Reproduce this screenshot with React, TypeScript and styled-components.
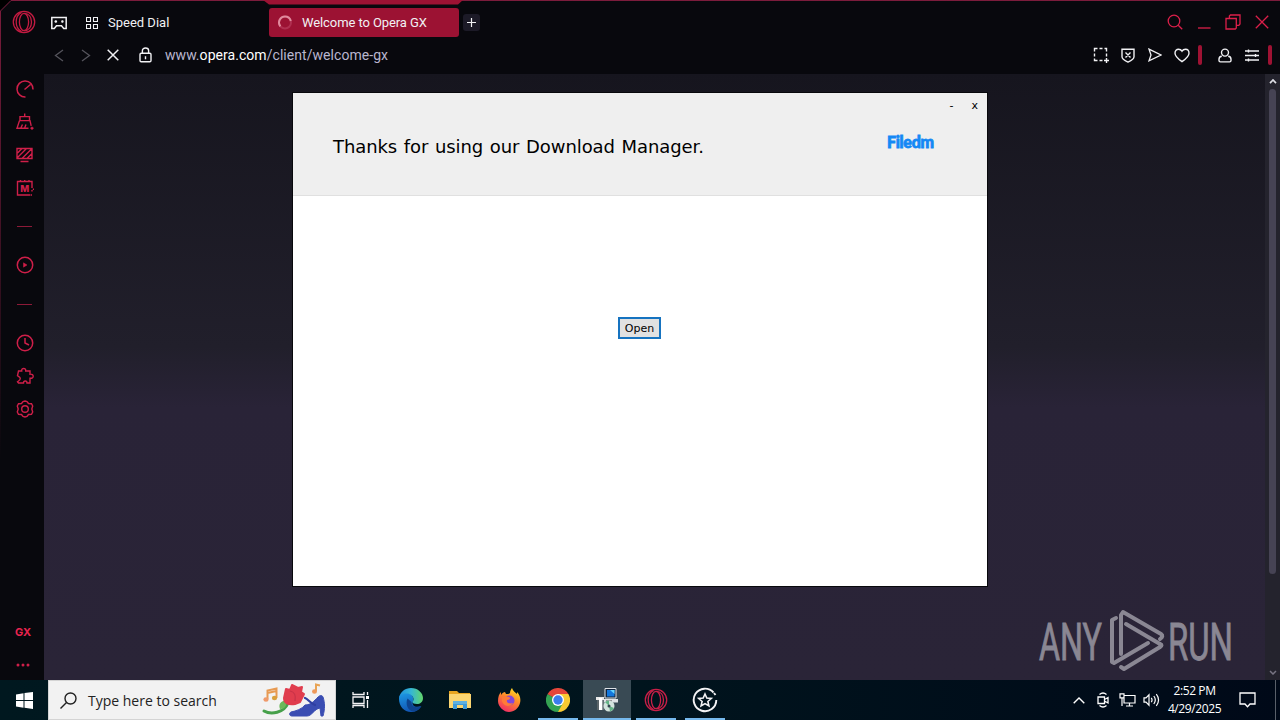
import type { ReactNode } from "react";
import styled, { createGlobalStyle } from "styled-components";

type IconProps = { w: number; h: number; sw?: number; children: ReactNode };

const Icon = ({ w, h, sw = 1.3, children }: IconProps) => (
  <Svg width={w} height={h} viewBox={`0 0 ${w} ${h}`} strokeWidth={sw}>
    {children}
  </Svg>
);

const OperaRing = () => (
  <Icon w={24} h={24} sw={1.3}>
    <circle cx="12" cy="12" r="10.7" />
    <ellipse cx="12" cy="12" rx="4.6" ry="8.6" />
    <path d="M9.5 2.4C5.500 4.500 4.200 8 4.200 12s1.300 7.500 5.300 9.600M12 3.400c5 0 7.500 4 7.500 8.600s-2.500 8.600-7.500 8.600" />
  </Icon>
);

const TitleBar = () => (
  <TitleRow>
    <OperaSlot>
      <OperaRing />
    </OperaSlot>
    <GamepadSlot>
      <Icon w={18} h={14} sw={1.5}>
        <path d="M1.8 1.5h14.4v11h-2.5l-2.2-2.7h-5l-2.2 2.7H1.8z" />
        <path d="M4.5 5.5h2.6M5.8 4.2v2.6M11.2 5.5h2.4M12.4 4.3v2.4" />
      </Icon>
    </GamepadSlot>
    <SpeedDialTab>
      <Icon w={12} h={12} sw={1.1}>
        <path d="M.5.5h4v4h-4zM7.500.5h4v4h-4zM.5 7.500h4v4h-4zM7.500 7.500h4v4h-4z" />
      </Icon>
      <TabText>Speed Dial</TabText>
    </SpeedDialTab>
    <ActiveTab>
      <Icon w={16} h={16} sw={2}>
        <circle cx="8" cy="7.500" r="6" stroke="#b02f50" />
        <path d="M3.4 11.300A6 6 0 0 1 8 1.500a6 6 0 0 1 5.800 4.500" stroke="#e08a9d" />
      </Icon>
      <TabText $spacing={-0.09}>Welcome to Opera GX</TabText>
    </ActiveTab>
    <NewTab>
      <Icon w={11} h={11} sw={1.2}>
        <path d="M5.5 1v9M1 5.5h9" />
      </Icon>
    </NewTab>
    <WindowControls>
      <ControlSlot>
        <Icon w={16} h={16}>
          <circle cx="7" cy="7" r="5.8" />
          <path d="M11.2 11.2l4 4" />
        </Icon>
      </ControlSlot>
      <ControlSlot>
        <Icon w={14} h={14}>
          <path d="M1 13h12.500" />
        </Icon>
      </ControlSlot>
      <ControlSlot>
        <Icon w={16} h={16}>
          <path d="M1 4.5h10.3V14l-1 1H1zM4.4 4.3V2l1-1H15v9l-1.2 1.4h-2.4" />
        </Icon>
      </ControlSlot>
      <ControlSlot>
        <Icon w={14} h={14}>
          <path d="M.8.8l12.4 12.4M13.2.8L.8 13.2" />
        </Icon>
      </ControlSlot>
    </WindowControls>
  </TitleRow>
);

const AddressBar = () => (
  <AddressRow>
    <NavGroup>
      <NavSlot $dim>
        <Icon w={10} h={13}>
          <path d="M9 1L1.5 6.5 9 12" />
        </Icon>
      </NavSlot>
      <NavSlot $dim>
        <Icon w={10} h={13}>
          <path d="M1 1l7.5 5.5L1 12" />
        </Icon>
      </NavSlot>
      <NavSlot>
        <Icon w={12} h={12} sw={1.5}>
          <path d="M.7.7l10.6 10.6M11.3.7L.7 11.3" />
        </Icon>
      </NavSlot>
    </NavGroup>
    <LockSlot>
      <Icon w={13} h={16} sw={1.4}>
        <rect x="1" y="6.2" width="11" height="8.6" rx="1.2" />
        <path d="M3.4 6V3.6C3.4 2 4.6 1 6.5 1s3.1 1 3.1 2.6V6M6.5 9.2v3" />
      </Icon>
    </LockSlot>
    <Url>
      www.<b>opera.com</b>/client/welcome-gx
    </Url>
    <ActionGroup>
      <ActionSlot>
        <Icon w={16} h={16} sw={1.4}>
          <path d="M1.5 4.5v-3h3M6.5 1.5h3M11.5 1.5h2v3M13.5 6.5v3M1.5 6.5v3M1.5 11.5v2h3M6.5 13.5h3M11 13.5h5M13.5 11v5" />
        </Icon>
      </ActionSlot>
      <ActionSlot>
        <Icon w={14} h={15} sw={1.4}>
          <path d="M1 1.3h12v7.5c0 2.6-3 4-6 5.3-3-1.3-6-2.7-6-5.3zM4.500 4.600l5 5M9.500 4.600l-5 5" />
        </Icon>
      </ActionSlot>
      <ActionSlot>
        <Icon w={14} h={14}>
          <path d="M1 1.2L13 7 1 12.8 3 7z" />
        </Icon>
      </ActionSlot>
      <ActionSlot>
        <Icon w={16} h={15} sw={1.4}>
          <path d="M8 13.6C4 10.8 1 8.300 1 5.200 1 2.800 2.600 1.200 4.500 1.200 6 1.200 7.300 2 8 3.200 8.700 2 10 1.200 11.500 1.200 13.400 1.200 15 2.800 15 5.200c0 3.100-3 5.600-7 8.400z" />
        </Icon>
      </ActionSlot>
      <RedBar />
      <ActionSlot>
        <Icon w={14} h={15} sw={1.4}>
          <circle cx="7" cy="4.6" r="3.5" />
          <path d="M3.800 8.300C2 8.500 1 9.500 1 11.200v1.300c0 .9.5 1.400 1.400 1.400h9.200c.9 0 1.400-.5 1.400-1.400v-1.300c0-1.700-1-2.700-2.800-2.900" />
        </Icon>
      </ActionSlot>
      <ActionSlot>
        <Icon w={14} h={13} sw={1.4}>
          <path d="M0 2h14M0 6.500h14M0 11h14M3.500.5v3M10.500 5v3M3.500 9.500v3" />
        </Icon>
      </ActionSlot>
      <RedBar />
    </ActionGroup>
  </AddressRow>
);

const SideBar = () => (
  <Side>
    <SideSlot $h={29}>
      <Icon w={18} h={18} sw={1.500}>
        <path d="M17 9.500A8 8 0 1 0 9.500 17M8.500 9.500L14.500 4.500" />
      </Icon>
    </SideSlot>
    <SideSlot>
      <Icon w={18} h={17} sw={1.400}>
        <path d="M4 7.500V3.600h9.500v3.900M8.700 3.500V.5M3.500 7.600h10.500l1.200 5.200M3.500 7.600L1 15.200h11.500M6.500 11.500l-1.800 3.700M10 11.500l-1.500 3.700M14.500 15.200h3M16 13.700v3" />
      </Icon>
    </SideSlot>
    <SideSlot>
      <Icon w={17} h={16} sw={1.400}>
        <path d="M1 1.500h15v10H1zM1.500 6l4.500-4.500M1.500 10.500l9-9M6 11.500l9.500-9.500M11 11.500l5-5M4.500 14.500h8" />
      </Icon>
    </SideSlot>
    <SideSlot>
      <Icon w={18} h={18} sw={1.400}>
        <path d="M16 9V2.500H1.500v13.500H14M4.500 2.500V1M8.700 2.500V1M13 2.500V1M16 11v1.500M17.500 9.500v1.500M14.500 16h1.500" />
        <MemoryLetter x="8.800" y="12.600" textAnchor="middle">
          M
        </MemoryLetter>
      </Icon>
    </SideSlot>
    <SideSlot $h={44}>
      <Divider />
    </SideSlot>
    <SideSlot $h={34}>
      <Icon w={18} h={18} sw={1.500}>
        <circle cx="9" cy="9" r="7.700" />
        <path d="M7.500 6.800L11 9l-3.500 2.200z" fill="currentColor" strokeWidth="0.500" />
      </Icon>
    </SideSlot>
    <SideSlot $h={44}>
      <Divider />
    </SideSlot>
    <SideSlot>
      <Icon w={18} h={18} sw={1.500}>
        <circle cx="9" cy="9" r="7.700" />
        <path d="M9 4v5l4 2" />
      </Icon>
    </SideSlot>
    <SideSlot>
      <Icon w={18} h={18} sw={1.400}>
        <path d="M2.500 4h3.200C5.500 2 6.500 1.500 7.700 1.500S9.900 2 9.700 4H14v3.200c2.200-.2 3.200.5 3.200 2s-1 2.200-3.200 2V16h-3c0-1.500-.8-2-1.800-2s-1.700.5-1.700 2h-5l-1-1.200c1-1 2.800-1.500 2.800-3.300 0-1.500-1.800-2-2.800-2.800z" />
      </Icon>
    </SideSlot>
    <SideSlot>
      <Icon w={18} h={18} sw={1.400}>
        <path d="M9 1l2 .5 1.500 2 3 .2 1.200 2.300-.9 3 .9 3-1.200 2.300-3 .2-1.500 2L9 17l-2-.5-1.500-2-3-.2L1.300 12l.9-3-.9-3 1.200-2.300 3-.2 1.500-2z" />
        <circle cx="9" cy="9" r="3.300" />
      </Icon>
    </SideSlot>
    <SideBottom>
      <GxLabel>GX</GxLabel>
      <SideSlot $h={31}>
        <Icon w={14} h={4} sw={0}>
          <g fill="currentColor">
            <circle cx="2" cy="2" r="1.500" />
            <circle cx="7" cy="2" r="1.500" />
            <circle cx="12" cy="2" r="1.500" />
          </g>
        </Icon>
      </SideSlot>
    </SideBottom>
  </Side>
);

const InstallerDialog = () => (
  <Dialog>
    <DialogHeader>
      <DialogTitle>Thanks for using our Download Manager.</DialogTitle>
      <HeaderRight>
        <DialogButtons>
          <span>-</span>
          <span>x</span>
        </DialogButtons>
        <BrandName>Filedm</BrandName>
      </HeaderRight>
    </DialogHeader>
    <DialogBody>
      <OpenButton type="button">Open</OpenButton>
    </DialogBody>
  </Dialog>
);

const Watermark = () => (
  <WatermarkSvg width="240" height="70" viewBox="0 0 240 70">
    <g
      fill="#8a8793"
      stroke="#8a8793"
      strokeWidth="0.900"
      fontFamily="Roboto, sans-serif"
      fontSize="52.500"
    >
      <text x="1" y="51" textLength="63" lengthAdjust="spacingAndGlyphs">ANY</text>
      <text x="130" y="51" textLength="65" lengthAdjust="spacingAndGlyphs">RUN</text>
    </g>
    <g fill="none" stroke="#8a8793" strokeWidth="4" strokeLinejoin="round" strokeLinecap="round">
      <path d="M78 9l-4 2v42l2 1 34-20" />
      <path d="M83 45V6l2-3 38 22q3 2-1 5" />
      <path d="M88 15l34 20q3 1 0 3L86 60l-3-2" />
    </g>
  </WatermarkSvg>
);

const SearchArt = () => (
  <svg width="66" height="36" viewBox="0 0 66 36">
    <path d="M3 29c7 4 20 2 24-8" fill="none" stroke="#46a04a" strokeWidth="3" strokeLinecap="round" />
    <path d="M19 27c-2-5 1-8 6-9 1 6-1 9-6 9z" fill="#6cb85a" />
    <path d="M25 7l4 1 2-5 6 3 4-1-1 5 3 2-4 8-5 2c-7 1-11-1-11-6z" fill="#e03d4e" stroke="#e03d4e" strokeWidth="2" strokeLinejoin="round" />
    <path d="M29 9c5 1 6 4 5 10" fill="none" stroke="#c73248" strokeWidth="1.200" />
    <path d="M6.500 17V8.500l9-2V16M6.500 11l9-2" fill="none" stroke="#e79a52" strokeWidth="2" />
    <ellipse cx="5" cy="17.500" rx="2.600" ry="2.200" fill="#ef9a6b" />
    <ellipse cx="13.500" cy="16" rx="2.600" ry="2.200" fill="#d9a03d" />
    <path d="M55 9V2.500l4 1" fill="none" stroke="#e9a455" strokeWidth="2" />
    <ellipse cx="53.500" cy="9.500" rx="2.500" ry="2.200" fill="#ef9a5b" />
    <path d="M30 30c5-1 11-3 14-7 6 0 9-4 13-8 2-2 4-2 5 0 2 6 2 12 0 19h-2l-1-8c-6 1-8 8-13 8H31c-3 0-3-3-1-4z" fill="#3a4db2" stroke="#3a4db2" strokeLinejoin="round" />
    <path d="M44 16c3 1 5 5 10 7" fill="none" stroke="#2f3fa2" strokeWidth="2.200" strokeLinecap="round" />
  </svg>
);

const EdgeIcon = () => (
  <svg width="24" height="24" viewBox="0 0 24 24">
    <defs>
      <linearGradient id="edgeTop" x1="0" x2="1">
        <stop offset="0" stopColor="#1f8fdc" />
        <stop offset=".5" stopColor="#35b6d6" />
        <stop offset="1" stopColor="#62d66a" />
      </linearGradient>
      <linearGradient id="edgeBase" x1="0" y1="0" x2="0.300" y2="1">
        <stop offset="0" stopColor="#1d9be6" />
        <stop offset="1" stopColor="#1257b5" />
      </linearGradient>
    </defs>
    <path d="M0 11C0 5 5 4 9 5c4 1 6 4 5 8-2 5 3 7 8 5-2 4-6 6-10 6C5 24 0 18 0 11z" fill="url(#edgeBase)" />
    <path d="M8.500 10.500C6 16 9 23 14.500 23.700 18.500 23 21 21 22.500 18c-5 2.500-10 1-10-4z" fill="#0e448f" />
    <path d="M0 10.500C1 4 6 0 12 0c7 0 12 5 12 10 0 4-3 6-6 6-3 0-4.500-1-4.500-2s1-1 1-3c0-3-3-5.500-7.500-5.500S1 8 0 10.500z" fill="url(#edgeTop)" />
  </svg>
);

const FolderIcon = () => (
  <svg width="22" height="20" viewBox="0 0 22 20">
    <path d="M0 1h8l2 2h11v4H0z" fill="#e8a520" />
    <path d="M0 4h22v14H0z" fill="#fbd571" />
    <path d="M4 11h14v8h-4v-4H8v4H4z" fill="#3f9ad8" />
    <path d="M4 11h14v3H4z" fill="#5fb0e0" />
  </svg>
);

const FirefoxIcon = () => (
  <svg width="24" height="24" viewBox="0 0 24 24">
    <defs>
      <linearGradient id="fox" x1="0.800" y1="0" x2="0.300" y2="1">
        <stop offset="0" stopColor="#ffe226" />
        <stop offset=".45" stopColor="#ff8a2a" />
        <stop offset="1" stopColor="#f02b66" />
      </linearGradient>
    </defs>
    <path d="M1 13c0-4 1-7 3-9v3c1-2 3-3 4-3l1 2c2 0 3 0 4-1 0-2 1-4 2-5 1 3 3 4 5 6v-2c3 3 4 7 3 11-1 5-6 9-11 9S1 19 1 13z" fill="url(#fox)" />
    <circle cx="12.500" cy="12.500" r="5" fill="#8347d9" />
    <path d="M5 9c3-2 5 0 7 0 2 1 1 3-2 3-1 3 3 4 6 3-3 5-10 3-11-2z" fill="#ff7b37" />
  </svg>
);

const ChromeIcon = () => (
  <svg width="24" height="24" viewBox="0 0 24 24">
    <path d="M12 12L1.600 6A12 12 0 0 1 22.400 6z" fill="#e5463a" />
    <path d="M12 12V6h10.400A12 12 0 0 1 12 24z" fill="#f9c932" />
    <path d="M12 12l5 3-5 9A12 12 0 0 1 1.600 6z" fill="#34a352" />
    <path d="M1.600 6H12v6z" fill="#e5463a" />
    <circle cx="12" cy="12" r="6" fill="#fff" />
    <circle cx="12" cy="12" r="4.700" fill="#3b7ded" />
  </svg>
);

const InstallerIcon = () => (
  <svg width="24" height="24" viewBox="0 0 24 24">
    <path d="M1 9h8v3H1z" fill="#e9e9e9" />
    <path d="M2 12h2v10H2z" fill="#5b6468" />
    <path d="M4 10h3v12H4z" fill="#fff" />
    <path d="M7 12h1.500v10H7z" fill="#8d9498" />
    <path d="M10 .5h11v9.500H10z" fill="#10243c" stroke="#dfe3e6" />
    <path d="M12 2h7.500v6.500H12z" fill="#1277dd" />
    <path d="M15 2h4.500v4z" fill="#62d4ff" />
    <path d="M9 11h14v3.500H9z" fill="#dfe2e5" />
    <path d="M11 13h6" stroke="#444" />
    <circle cx="14" cy="18" r="5.500" fill="#d3e3dd" />
    <path d="M14 18l-4-4a6 6 0 0 1 4-1.500zM14 18l5 2a6 6 0 0 1-4 3.500z" fill="#64b386" />
    <circle cx="14" cy="18" r="1.500" fill="#354750" />
  </svg>
);

const StarIcon = () => (
  <Icon w={26} h={26} sw={1.900}>
    <path d="M21.500 5.500A11.300 11.300 0 1 0 24.300 13M22 6l1.500 2" />
    <path d="M13 7l1.800 4.100 4.500.4-3.400 3 1 4.400-3.900-2.300L9.100 18.900l1-4.400-3.400-3 4.500-.4z" strokeWidth="1.600" />
  </Icon>
);

const TaskBar = () => (
  <Bar>
    <StartSlot>
      <svg width="17" height="17" viewBox="0 0 17 17">
        <path d="M0 2.400L7.500 1.300V8H0zM8.500 1.100L17 0v8H8.500zM0 9h7.500v6.700L0 14.600zM8.500 9H17v8l-8.500-1.200z" fill="#fff" />
      </svg>
    </StartSlot>
    <SearchBox>
      <Icon w={17} h={17} sw={1.400}>
        <circle cx="10.500" cy="6.500" r="5.500" />
        <path d="M6.500 10.500L.5 16.500" />
      </Icon>
      <SearchText>Type here to search</SearchText>
      <SearchArt />
    </SearchBox>
    <TaskSlot>
      <Icon w={18} h={16} sw={1.300}>
        <path d="M1 0v2.500h11V0M1 5h11v6.500H1zM1 16v-2.500h11V16M15.500 0v3M15.500 8v8" />
        <path d="M14 4h3v3h-3z" fill="#fff" stroke="none" />
      </Icon>
    </TaskSlot>
    <RunningApps>
      <TaskSlot>
        <EdgeIcon />
      </TaskSlot>
      <TaskSlot>
        <FolderIcon />
      </TaskSlot>
      <TaskSlot>
        <FirefoxIcon />
      </TaskSlot>
      <TaskSlot $running>
        <ChromeIcon />
      </TaskSlot>
      <TaskSlot $running $active>
        <InstallerIcon />
      </TaskSlot>
      <TaskSlot $running $red>
        <OperaRing />
      </TaskSlot>
      <TaskSlot $running>
        <StarIcon />
      </TaskSlot>
    </RunningApps>
    <Tray>
      <TraySlot>
        <Icon w={12} h={7} sw={1.400}>
          <path d="M.7 6.300L6 1l5.300 5.300" />
        </Icon>
      </TraySlot>
      <TraySlot>
        <Icon w={12} h={16} sw={1.300}>
          <path d="M2.500 2.500C4.500.8 7.500.8 9.500 2.500M2.500 13.500c2 1.700 5 1.700 7 0M1 5h6.500v6.500H1zM7.500 7.500L11 5.500v5.500L7.500 9" />
        </Icon>
      </TraySlot>
      <TraySlot>
        <Icon w={17} h={14} sw={1.200}>
          <path d="M5 2.500h11v7.500H5zM10.500 10v3M7 13h7M1 .8h4v4H1zM3 4.800V13" />
        </Icon>
      </TraySlot>
      <TraySlot>
        <Icon w={17} h={14} sw={1.200}>
          <path d="M1 4.800h2l3-3v10.400l-3-3H1zM8.300 4.800q1.500 2.200 0 4.400M10.800 3q3 4 0 8M13.300 1.200q4.500 5.800 0 11.600" />
        </Icon>
      </TraySlot>
      <Clock>
        <span>2:52 PM</span>
        <span>4/29/2025</span>
      </Clock>
      <NotifySlot>
        <Icon w={17} h={16} sw={1.300}>
          <path d="M1 1h15v11h-5l-2.500 2.700L6 12H1z" />
        </Icon>
      </NotifySlot>
      <ShowDesktop />
    </Tray>
  </Bar>
);

const App = () => (
  <>
    <GlobalStyle />
    <Screen>
      <Browser>
        <TitleBar />
        <AddressBar />
        <Main>
          <SideBar />
          <PageArea />
          <ScrollTrack>
            <Icon w={8} h={5} sw={1.700}>
              <path d="M1 4.200L4 1l3 3.200" />
            </Icon>
            <ScrollThumb />
            <Icon w={8} h={5} sw={1.500}>
              <path d="M1 1l3 3 3-3" stroke="#777482" />
            </Icon>
          </ScrollTrack>
        </Main>
        <FrameLines width="1280" height="460" viewBox="0 0 1280 460">
          <defs>
            <linearGradient id="edge" x1="0" y1="0" x2="0" y2="460" gradientUnits="userSpaceOnUse">
              <stop offset="0" stopColor="#7c1c3c" />
              <stop offset="1" stopColor="#7c1c3c" stopOpacity="0" />
            </linearGradient>
          </defs>
          <path d="M0 0h11L0 10z" fill="#000" />
          <path d="M.5 460V11L11 .5h1269" fill="none" stroke="url(#edge)" />
          <path d="M263 0h200l-5 4.500H269z" fill="#9c1233" />
        </FrameLines>
      </Browser>
      <TaskBar />
      <InstallerDialog />
      <Watermark />
    </Screen>
  </>
);

export default App;

const GlobalStyle = createGlobalStyle`
  * {
    box-sizing: border-box;
  }

  body {
    margin: 0;
    overflow: hidden;
    background: #000;
  }
`;

const Svg = styled.svg`
  display: block;
  flex-shrink: 0;
  fill: none;
  stroke: currentColor;
`;

const Screen = styled.div`
  position: relative;
  display: flex;
  flex-direction: column;
  width: 1280px;
  height: 720px;
  overflow: hidden;
  font-family: Roboto, sans-serif;
`;

const Browser = styled.div`
  position: relative;
  display: flex;
  flex-direction: column;
  height: 680px;
  background: #08080d;
`;

const FrameLines = styled.svg`
  position: absolute;
  top: 0;
  left: 0;
  pointer-events: none;
`;

const TitleRow = styled.div`
  display: flex;
  align-items: center;
  height: 45px;
  padding-left: 12px;
  color: #f1f1f4;
`;

const OperaSlot = styled.div`
  width: 38px;
  padding-bottom: 1px;
  color: #c41b42;
`;

const GamepadSlot = styled.div`
  width: 36px;
`;

const SpeedDialTab = styled.div`
  display: flex;
  align-items: center;
  gap: 10px;
  width: 183px;
`;

const ActiveTab = styled.div`
  display: flex;
  align-items: center;
  gap: 9px;
  width: 190px;
  height: 29px;
  padding-left: 8px;
  border-radius: 3px;
  background: #9c1233;
`;

const TabText = styled.span<{ $spacing?: number }>`
  font-size: 13px;
  letter-spacing: ${(props) => props.$spacing ?? 0}px;
  white-space: nowrap;
`;

const NewTab = styled.div`
  display: flex;
  justify-content: center;
  align-items: center;
  width: 17px;
  height: 17px;
  margin-left: 4px;
  border-radius: 3px;
  background: #1c1a27;
`;

const WindowControls = styled.div`
  display: flex;
  margin-left: auto;
  padding: 0 4px 1px 0;
  color: #dc1f4a;
`;

const ControlSlot = styled.div`
  display: flex;
  justify-content: center;
  align-items: center;
  width: 29px;
`;

const AddressRow = styled.div`
  display: flex;
  align-items: center;
  height: 29px;
  padding-bottom: 9px;
  color: #f1f1f4;
`;

const NavGroup = styled.div`
  display: flex;
  align-items: center;
  padding-left: 45px;
`;

const NavSlot = styled.div<{ $dim?: boolean }>`
  display: flex;
  justify-content: center;
  align-items: center;
  width: 27px;
  color: ${(props) => (props.$dim ? "#55545c" : "#f1f1f4")};
`;

const LockSlot = styled.div`
  width: 39px;
  padding-left: 13px;
`;

const Url = styled.div`
  padding-bottom: 1px;
  font-size: 14px;
  letter-spacing: 0.05px;
  white-space: nowrap;
  color: #b9b6cf;

  > b {
    font-weight: 400;
    color: #fff;
  }
`;

const ActionGroup = styled.div`
  display: flex;
  align-items: center;
  margin-left: auto;
  padding-right: 8px;
`;

const ActionSlot = styled.div`
  display: flex;
  justify-content: center;
  align-items: center;
  width: 27px;
`;

const RedBar = styled.div`
  width: 4px;
  height: 20px;
  margin: 0 9px 0 3px;
  border-radius: 2px;
  background: #9f1233;

  &:last-child {
    margin: 0 0 0 3px;
  }
`;

const Main = styled.div`
  display: flex;
  flex: 1;
`;

const Side = styled.div`
  display: flex;
  flex-direction: column;
  width: 44px;
  padding-left: 5px;
  color: #cf1f49;
`;

const SideSlot = styled.div<{ $h?: number }>`
  display: flex;
  justify-content: center;
  align-items: center;
  height: ${(props) => props.$h ?? 33}px;

  &:first-child {
    margin-bottom: 2px;
  }
`;

const MemoryLetter = styled.text`
  fill: currentColor;
  stroke: none;
  font-family: Inter, sans-serif;
  font-size: 9.5px;
  font-weight: 800;
`;

const SideBottom = styled.div`
  margin-top: auto;
  padding-right: 3px;
`;

const Divider = styled.div`
  width: 15px;
  height: 1px;
  background: #8c1a38;
`;

const GxLabel = styled.div`
  text-align: center;
  font-family: Inter, sans-serif;
  font-size: 11px;
  font-weight: 700;
  line-height: 33px;
  color: #e8244f;
`;

const PageArea = styled.div`
  flex: 1;
  background: linear-gradient(#16151e, #211f2b 45%, #292337 55%, #2a2437);
`;

const ScrollTrack = styled.div`
  display: flex;
  flex-direction: column;
  justify-content: space-between;
  align-items: center;
  width: 15px;
  padding: 5px 0;
  background: #24232d;
  color: #dddde4;
`;

const ScrollThumb = styled.div`
  width: 7px;
  height: 485px;
  margin: 5px 0 auto;
  border-radius: 4px;
  background: #464354;
`;

const Dialog = styled.div`
  position: absolute;
  top: 92px;
  left: 292px;
  display: flex;
  flex-direction: column;
  width: 696px;
  height: 495px;
  border: 1px solid #08080c;
  background: #fff;
`;

const DialogHeader = styled.div`
  display: flex;
  justify-content: space-between;
  height: 103px;
  padding-left: 40px;
  border-bottom: 1px solid #e0e0e0;
  background: #efefef;
`;

const DialogTitle = styled.div`
  padding-top: 42px;
  font-family: "DejaVu Sans", sans-serif;
  font-size: 18px;
  line-height: 24px;
  letter-spacing: -0.08px;
  word-spacing: 1px;
  white-space: nowrap;
  color: #000;
`;

const HeaderRight = styled.div`
  width: 101px;
`;

const DialogButtons = styled.div`
  display: flex;
  justify-content: flex-end;
  gap: 18px;
  height: 37px;
  padding: 5px 9px 0 0;
  font-family: "DejaVu Sans", sans-serif;
  font-size: 11px;
  line-height: 16px;
  color: #000;
`;

const BrandName = styled.div`
  padding-left: 1px;
  font-family: Lato, sans-serif;
  font-size: 16px;
  font-weight: 900;
  line-height: 24px;
  letter-spacing: -0.3px;
  -webkit-text-stroke: 0.8px #1488f5;
  color: #1488f5;
`;

const DialogBody = styled.div`
  flex: 1;
  display: flex;
  justify-content: center;
  align-items: flex-start;
  padding: 121px 1px 0 0;
`;

const OpenButton = styled.button`
  width: 43px;
  height: 22px;
  padding: 0;
  border: 2px solid #1673c0;
  background: #e1e1e1;
  font-family: "DejaVu Sans", sans-serif;
  font-size: 11px;
  color: #000;
`;

const WatermarkSvg = styled.svg`
  position: absolute;
  top: 609px;
  left: 1038px;
`;

const Bar = styled.div`
  display: flex;
  height: 40px;
  background: linear-gradient(90deg, #00181f, #00141d 50%, #000918);
  color: #fff;
`;

const StartSlot = styled.div`
  display: flex;
  justify-content: center;
  align-items: center;
  width: 48px;
`;

const SearchBox = styled.div`
  display: flex;
  align-items: center;
  width: 288px;
  padding: 0 8px 0 11px;
  border: 1px solid #d4d4d4;
  background: #f2f2f2;
  color: #222;
`;

const SearchText = styled.span`
  flex: 1;
  padding-left: 11px;
  font-family: "Open Sans", sans-serif;
  font-size: 14px;
  white-space: nowrap;
`;

const RunningApps = styled.div`
  display: flex;
  margin-left: 1px;
`;

const TaskSlot = styled.div<{ $running?: boolean; $active?: boolean; $red?: boolean }>`
  position: relative;
  display: flex;
  justify-content: center;
  align-items: center;
  width: ${(props) => (props.$active ? 48 : 49)}px;
  margin-left: ${(props) => (props.$active ? 1 : 0)}px;
  padding-left: ${(props) => (props.$active ? 0 : 1)}px;
  color: ${(props) => (props.$red ? "#c91f48" : "#f4f4f6")};
  background: ${(props) => (props.$active ? "#394a54" : "none")};

  &:nth-child(3) {
    padding-left: 0;
  }

  &::after {
    content: "";
    display: ${(props) => (props.$running ? "block" : "none")};
    position: absolute;
    bottom: 0;
    left: ${(props) => (props.$active ? 0 : 5)}px;
    right: ${(props) => (props.$active ? 0 : 4)}px;
    height: 2px;
    background: #76b9ed;
  }
`;

const Tray = styled.div`
  display: flex;
  align-items: center;
  margin-left: auto;
`;

const TraySlot = styled.div`
  display: flex;
  justify-content: center;
  width: 24px;
`;

const Clock = styled.div`
  display: flex;
  flex-direction: column;
  align-items: center;
  width: 63px;
  font-family: "Open Sans", sans-serif;
  font-size: 12px;
  line-height: 18px;
  letter-spacing: -0.4px;
  white-space: nowrap;
`;

const NotifySlot = styled.div`
  display: flex;
  justify-content: center;
  width: 42px;
  margin-right: 7px;
`;

const ShowDesktop = styled.div`
  width: 5px;
  height: 40px;
  border-left: 1px solid #59606a;
`;
